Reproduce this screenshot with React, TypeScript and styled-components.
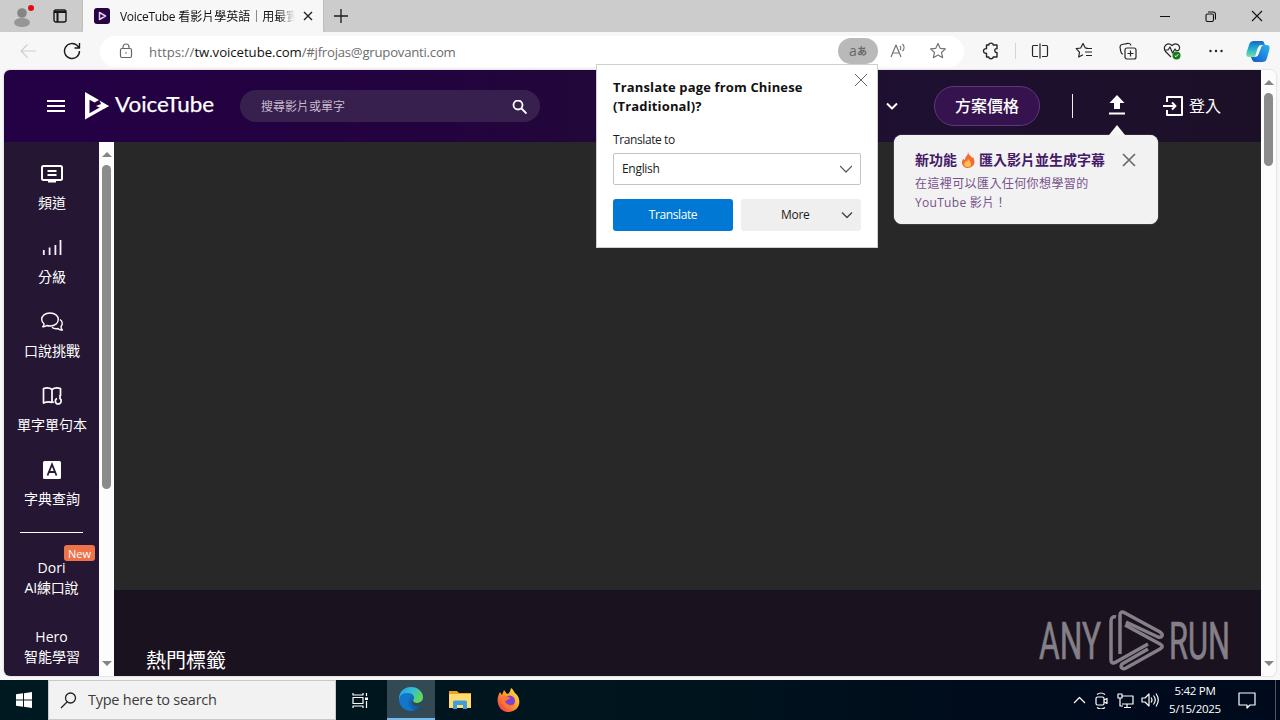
import styled, { createGlobalStyle } from "styled-components";

const GlobalStyle = createGlobalStyle`
  * {
    box-sizing: border-box;
  }
  body {
    margin: 0;
    overflow: hidden;
    font-family: "Open Sans", "Noto Sans", "Noto Sans CJK TC", sans-serif;
  }
  svg {
    display: block;
    flex: none;
  }
`;

const Screen = styled.div`
  position: relative;
  width: 1280px;
  height: 720px;
  display: flex;
  flex-direction: column;
  background: #f7f7f7;
  overflow: hidden;
`;

const Text = styled.span<{
  $size?: number;
  $color?: string;
  $weight?: number;
  $spacing?: number;
  $line?: number;
}>`
  font-size: ${({ $size = 12 }) => $size}px;
  color: ${({ $color = "#fff" }) => $color};
  font-weight: ${({ $weight = 400 }) => $weight};
  letter-spacing: ${({ $spacing = 0 }) => $spacing}px;
  line-height: ${({ $line = 20 }) => $line}px;
  white-space: nowrap;
`;

/* Browser chrome */

const TabStrip = styled.div`
  height: 32px;
  display: flex;
  background: #cccccc;
`;

const ProfileArea = styled.div`
  width: 83px;
  display: flex;
  align-items: center;
  padding-left: 11px;
  gap: 19px;
  border-right: 1px solid #bdbdbd;
  border-bottom-right-radius: 4px;
`;

const ActiveTab = styled.div`
  width: 240px;
  display: flex;
  align-items: center;
  padding-left: 11px;
  background: #f7f7f7;
`;

const TabTitle = styled.div`
  width: 178px;
  margin: 0 5px 0 10px;
  overflow: hidden;
  white-space: nowrap;
  line-height: 20px;
  mask-image: linear-gradient(to right, #000 158px, transparent 175px);
`;

const NewTab = styled.div`
  display: flex;
  align-items: center;
  padding-left: 10px;
  border-left: 1px solid #bdbdbd;
  border-bottom-left-radius: 4px;
`;

const WindowButtons = styled.div`
  display: flex;
  align-items: center;
  margin-left: auto;
  padding-right: 17px;
  gap: 35px;
`;

const Toolbar = styled.div`
  height: 38px;
  display: flex;
  align-items: center;
  padding: 0 10px 0 19px;
  background: #f7f7f7;
`;

const NavButtons = styled.div`
  width: 81px;
  display: flex;
  gap: 26px;
`;

const AddressBar = styled.div`
  width: 864px;
  height: 31px;
  display: flex;
  align-items: center;
  padding: 0 17px 0 18px;
  border-radius: 16px;
  background: #fff;
`;

const Url = styled.div`
  margin-left: 15px;
`;

const AddressActions = styled.div`
  display: flex;
  align-items: center;
  margin-left: auto;
  gap: 22px;
`;

const TranslateBadge = styled.div`
  width: 40px;
  height: 26px;
  margin-right: -11px;
  border-radius: 13px;
  display: flex;
  align-items: center;
  justify-content: center;
  background: #b9b9b9;
`;

const ToolbarIcons = styled.div`
  flex: 1;
  display: flex;
  align-items: center;
  gap: 26px;
  padding-left: 18px;
`;

const ToolbarDivider = styled.div`
  width: 1px;
  height: 16px;
  margin: 0 -11px;
  background: #d4d4d4;
`;

const CopilotSlot = styled.div`
  margin-left: -5px;
`;

/* Page */

const Viewport = styled.div`
  width: 1272px;
  height: 606px;
  margin-left: 4px;
  display: flex;
  border-radius: 6px;
  overflow: hidden;
  background: #fcfcfc;
  box-shadow: 0 0 2px rgba(0, 0, 0, 0.25);
`;

const Page = styled.div`
  width: 1257px;
  display: flex;
  flex-direction: column;
`;

const Header = styled.header`
  height: 72px;
  flex: none;
  display: flex;
  align-items: center;
  padding: 0 40px 0 42px;
  background: linear-gradient(90deg, #240045 0%, #23033e 35%, #1e1030 72%, #1c1028 100%);
`;

const LogoSlot = styled.div`
  margin-left: 19px;
`;

const SearchBox = styled.div`
  width: 300px;
  height: 32px;
  margin-left: 26px;
  padding: 2px 13px 0 21px;
  border-radius: 16px;
  display: flex;
  align-items: center;
  justify-content: space-between;
  background: #38204e;
`;

const HeaderActions = styled.div`
  margin-left: auto;
  display: flex;
  align-items: center;
`;

const PriceButton = styled.div`
  width: 106px;
  height: 40px;
  margin-left: 36px;
  border: 1px solid #60377e;
  border-radius: 20px;
  display: flex;
  align-items: center;
  justify-content: center;
  background: #36124f;
`;

const HeaderDivider = styled.div`
  width: 1px;
  height: 24px;
  margin: 0 36px 0 32px;
  background: #eee;
`;

const UploadSlot = styled.div`
  margin-top: -3px;
`;

const Login = styled.div`
  display: flex;
  align-items: center;
  gap: 6px;
  margin-left: 38px;
`;

const Body = styled.div`
  flex: 1;
  display: flex;
  min-height: 0;
`;

const Sidebar = styled.nav`
  width: 95px;
  overflow: hidden;
  background: #251733;
`;

const SideItem = styled.div`
  height: 74px;
  display: flex;
  flex-direction: column;
  align-items: center;
  padding-top: 20px;
  gap: 7px;
`;

const SideLabel = styled(Text)`
  padding-left: 1px;
`;

const SideDivider = styled.div`
  width: 63px;
  height: 1px;
  margin: 20px 0 25px 16px;
  background: #fff;
`;

const SideLink = styled.div`
  position: relative;
  height: 69px;
  display: flex;
  flex-direction: column;
  align-items: center;
`;

const NewBadge = styled.div`
  position: absolute;
  right: 4px;
  top: -13px;
  width: 31px;
  height: 16px;
  padding-top: 1px;
  border-radius: 3px;
  display: flex;
  align-items: center;
  justify-content: center;
  background: #ee734a;
`;

const Scrollbar = styled.div`
  width: 15px;
  height: 100%;
  flex: none;
  display: flex;
  flex-direction: column;
  align-items: center;
  padding: 10px 0;
  background: #fcfcfc;
`;

const Thumb = styled.div<{ $height: number }>`
  width: 9px;
  height: ${({ $height }) => $height}px;
  margin: 8px 0 auto;
  border-radius: 5px;
  background: #8b8b8b;
`;

const Arrow = styled.div<{ $down?: boolean }>`
  border: 5px solid transparent;
  border-top: ${({ $down }) => ($down ? "5px solid #858585" : "0")};
  border-bottom: ${({ $down }) => ($down ? "0" : "5px solid #858585")};
`;

const Content = styled.main`
  flex: 1;
  display: flex;
  flex-direction: column;
`;

const Hero = styled.div`
  flex: none;
  height: 448px;
  background: #282828;
`;

const Tags = styled.div`
  flex: none;
  height: 86px;
  display: flex;
  justify-content: space-between;
  padding: 20px 30px 0 32px;
  background: #1a131f;
`;

const TagsTitle = styled.div`
  margin-top: 35px;
`;

/* Overlays */

const Popup = styled.div`
  position: absolute;
  left: 596px;
  top: 64px;
  width: 282px;
  height: 184px;
  padding: 13px 16px 16px;
  border: 1px solid #cfcfd2;
  background: #fff;
`;

const PopupTop = styled.div`
  display: flex;
  align-items: flex-start;
  justify-content: space-between;
  height: 49px;
`;

const PopupClose = styled.div`
  margin-right: -7px;
  margin-top: -5px;
`;

const Select = styled.div`
  height: 32px;
  margin: 3px 0 14px;
  padding: 0 8px;
  border: 1px solid #c4c4c4;
  border-radius: 2px;
  display: flex;
  align-items: center;
  justify-content: space-between;
`;

const ButtonRow = styled.div`
  display: flex;
  gap: 8px;
`;

const Button = styled.div<{ $primary?: boolean }>`
  width: 120px;
  height: 32px;
  padding: ${({ $primary }) => ($primary ? "0" : "0 8px 0 40px")};
  border-radius: 3px;
  display: flex;
  align-items: center;
  justify-content: ${({ $primary }) => ($primary ? "center" : "space-between")};
  background: ${({ $primary }) => ($primary ? "#0078d4" : "#efefef")};
`;

const Tooltip = styled.div`
  position: absolute;
  left: 894px;
  top: 135px;
  width: 264px;
  height: 89px;
  padding: 15px 22px 0 21px;
  border-radius: 8px;
  background: #f2f2f2;
  box-shadow: 0 0 1px #fff;
  &::before {
    content: "";
    position: absolute;
    left: 215px;
    top: -10px;
    border: 8px solid transparent;
    border-top: 0;
    border-bottom: 10px solid #f6f6f6;
  }
`;

const TooltipTop = styled.div`
  display: flex;
  justify-content: space-between;
  align-items: center;
  height: 20px;
  margin-bottom: 4px;
`;

const TooltipTitle = styled.div`
  display: flex;
  align-items: center;
  gap: 4px;
`;

const TooltipLine = styled.div`
  height: 19px;
  display: flex;
  align-items: center;
`;

/* Taskbar */

const Taskbar = styled.div`
  height: 40px;
  margin-top: 4px;
  display: flex;
  background: linear-gradient(90deg, #001820 0%, #00141d 55%, #000b1c 78%, #000a1d 100%);
`;

const TaskCell = styled.div<{ $width?: number; $active?: boolean }>`
  width: ${({ $width = 49 }) => $width}px;
  display: flex;
  align-items: center;
  justify-content: center;
  background: ${({ $active }) => ($active ? "#334a54" : "transparent")};
  border-bottom: ${({ $active }) => ($active ? "2px solid #76b9ed" : "0")};
`;

const TaskSearch = styled.div`
  width: 288px;
  display: flex;
  align-items: center;
  padding-left: 11px;
  gap: 11px;
  border: 1px solid #c9c9c9;
  background: #f2f2f2;
`;

const Tray = styled.div`
  display: flex;
  align-items: center;
  margin-left: auto;
  padding-right: 4px;
  gap: 7px;
`;

const Clock = styled.div`
  width: 56px;
  margin: 0 8px 0 1px;
  display: flex;
  flex-direction: column;
  align-items: center;
`;

const TrayEnd = styled.div`
  width: 1px;
  height: 40px;
  margin-left: 12px;
  background: #4c5563;
`;

type IconProps = {
  w?: number;
  h?: number;
  color?: string;
  stroke?: number;
  box?: string;
  children: React.ReactNode;
};

const Icon = ({
  w = 18,
  h = w,
  color = "#262626",
  stroke = 1.2,
  box,
  children,
}: IconProps) => (
  <svg
    width={w}
    height={h}
    viewBox={box || `0 0 ${w} ${h}`}
    fill="none"
    stroke={color}
    strokeWidth={stroke}
    strokeLinejoin="round"
  >
    {children}
  </svg>
);

const starPath = "M9 1.5l2.2 4.8 5.2.6-3.9 3.6 1.1 5.2L9 13.1l-4.6 2.6 1.1-5.2-3.9-3.6 5.2-.6z";

const SIDE_ITEMS = [
  {
    label: "頻道",
    icon: (
      <Icon w={24} color="#fff" stroke={2}>
        <rect x="2" y="4" width="20" height="14" rx="1.5" />
        <path d="M8 19.5h8M7.5 9h9M7.5 13h9" />
      </Icon>
    ),
  },
  {
    label: "分級",
    icon: (
      <Icon w={24} color="#f7eeff" stroke={1.8}>
        <path d="M3.8 19v-5M9.6 19v-7.500M15.4 19V9M20.500 19V4" />
      </Icon>
    ),
  },
  {
    label: "口說挑戰",
    icon: (
      <Icon w={24} color="#fff" stroke={1.4}>
        <path d="M10 3c5 0 8.3 2.8 8.3 6.5S15 16 10 16c-1.2 0-2.3-.2-3.3-.5-1 .9-2.3 1.4-4 1.2 1-.8 1.4-1.8 1.3-3C2.500 12.500 1.700 11 1.700 9.500 1.700 5.800 5 3 10 3zM20 9.500c2.300 1.500 3.200 4.500 1 7 0 1.500.3 2.500 1.400 3.500-2 .3-3.500-.4-4.500-1.500-2.300.5-4.600-.1-6-1.300" />
      </Icon>
    ),
  },
  {
    label: "單字單句本",
    icon: (
      <Icon w={24} color="#fff" stroke={1.7}>
        <path d="M14 18.500q-1.500-1-2.500 0-3-1.500-8 .500V4.500c3-1 6-1 8.500 1 2.500-2 5.500-2 8.500-1V12M12 5.500V18M17 14.500c-2.500 1-2 5.500 1 5.500 3.500 0 4-4 2-5.500M20 11v4" />
      </Icon>
    ),
  },
  {
    label: "字典查詢",
    icon: (
      <Icon w={24} color="#2a1b35" stroke={1.8}>
        <rect x="3" y="3" width="18" height="18" rx="1.500" fill="#fff" stroke="none" />
        <path d="M7.500 17.500L12 6.500l4.500 11M9 14h6" strokeLinejoin="miter" />
      </Icon>
    ),
  },
];

const BrandLogo = () => (
  <Icon w={129} h={30} color="none">
    <path fill="#fff" d="M0 1l14 8-4.500 2.600-5-2.900v13.600L19 14l5 1-24 13.500z" />
    <path fill="#fff" d="M14.500 9.500L24 15l-6 3-7-3 5-2z" />
    <text
      x="30"
      y="21"
      fill="#fff"
      stroke="#fff"
      strokeWidth=".25"
      fontFamily="Lato, sans-serif"
      fontSize="21.500"
      textLength="99"
      lengthAdjust="spacingAndGlyphs"
    >
      VoiceTube
    </text>
  </Icon>
);

const Watermark = () => (
  <Icon w={192} h={62} color="#858087" stroke={3.500}>
    <g
      fill="#858087"
      strokeWidth=".7"
      fontFamily="Roboto, sans-serif"
      fontSize="52"
    >
      <text x="0" y="49" textLength="62" lengthAdjust="spacingAndGlyphs">
        ANY
      </text>
      <text x="130" y="49" textLength="61" lengthAdjust="spacingAndGlyphs">
        RUN
      </text>
    </g>
    <path d="M81 44V5c0-3 2-4 5-2l35 19c4 3 2 6-2 5L87 12M77 7c-3-1-5 1-5 4v39c0 3 2 4 5 2l32-18M86 15l35 19c3 2 3 3 0 5L87 58c-4 2-6-1-4-4l26-15" />
  </Icon>
);

const EdgeIcon = () => (
  <svg width="26" height="26" viewBox="0 0 26 26">
    <defs>
      <linearGradient id="edgeTop" x1="0" x2="1" y1="0" y2=".5">
        <stop stopColor="#249ae0" />
        <stop offset=".55" stopColor="#35bfd0" />
        <stop offset="1" stopColor="#62d957" />
      </linearGradient>
      <linearGradient id="edgeBody" x1="0" x2="1" y1="0" y2="1">
        <stop stopColor="#168cd8" />
        <stop offset="1" stopColor="#0b4fa1" />
      </linearGradient>
    </defs>
    <circle cx="13" cy="13" r="12" fill="url(#edgeBody)" />
    <path d="M1 13C1 5 7 1 13 1c7 0 12 5 12 10 0 4-3 6-7 6-2 0-4-1-3-2 3-5-1-8-5-8-5 0-8 3-9 6z" fill="url(#edgeTop)" />
    <path d="M15 15q1 2.500 5 2 3 0 5-3l1 5-3 .5c-5 2-9 0-10-4z" fill="#334a54" />
    <path d="M3 9c6-4 11 0 9 3-4 4-1 11 5 12C6 27-1 18 3 9z" fill="#1476ca" />
  </svg>
);

const FirefoxIcon = () => (
  <svg width="24" height="25" viewBox="0 0 24 25">
    <defs>
      <linearGradient id="fox" x1="1" x2="0" y1="0" y2="1">
        <stop stopColor="#fff24a" />
        <stop offset=".5" stopColor="#ff952a" />
        <stop offset="1" stopColor="#ef2360" />
      </linearGradient>
    </defs>
    <path d="M3 4l2 3 2-5 3 4c2 0 3-2 4-6 2 1 3 4 4 5 7 5 6 18-6 19C3 25-3 14 3 4z" fill="url(#fox)" />
    <circle cx="12.500" cy="13" r="5.500" fill="#7b42d9" />
    <path d="M4 9c4-2 7-1 10 2-3-1-3 2-6 2 1 4 6 5 9 3-3 7-14 4-13-7z" fill="#ff772f" />
  </svg>
);

const CopilotIcon = () => (
  <svg width="24" height="23" viewBox="0 0 24 23">
    <defs>
      <linearGradient id="copA" x1="0" x2="0" y1="0" y2="1">
        <stop stopColor="#1467c9" />
        <stop offset=".55" stopColor="#26b7cf" />
        <stop offset="1" stopColor="#7de0a0" />
      </linearGradient>
      <linearGradient id="copB" x1="1" x2="0" y1="0" y2="1">
        <stop stopColor="#29b6f2" />
        <stop offset="1" stopColor="#1556c8" />
      </linearGradient>
    </defs>
    <path d="M8 1h8c2 0 2 2 3 4h-4c-2 0-3 2-4 5l-1 4c-1 3-2 3-4 3H3c-3 0-3-3-2-6l2-6c1-3 2-4 5-4z" fill="url(#copA)" />
    <path d="M16 22H9c-2 0-3-2-4-5h3c3 0 4-1 5-4l2-5c1-3 2-3 4-3h2c3 0 3 3 2 6l-2 7c-1 3-2 4-5 4z" fill="url(#copB)" />
  </svg>
);

const BrowserChrome = () => (
  <>
    <TabStrip>
      <ProfileArea>
        <Icon w={23} h={24} color="none">
          <circle cx="11" cy="9" r="4.800" fill="#858585" />
          <ellipse cx="11" cy="18.500" rx="8" ry="4.500" fill="#969696" />
          <circle cx="20" cy="4" r="3" fill="#e30b13" />
        </Icon>
        <Icon w={14} color="#171717" stroke={1.400}>
          <rect x="1" y="1" width="12" height="12" rx="2" />
          <path d="M1 3h12M4.500 3v10" strokeWidth="2" />
        </Icon>
      </ProfileArea>
      <ActiveTab>
        <Icon w={16} color="none">
          <rect width="16" height="16" rx="3" fill="#260342" />
          <path d="M5.500 4.500l6 3.500-6 3.500z" stroke="#e4c9f4" strokeWidth="1.500" />
        </Icon>
        <TabTitle>
          <Text $color="#111" $spacing={-0.3}>VoiceTube</Text>
          <Text $color="#111"> 看影片學英語｜用最實用</Text>
        </TabTitle>
        <Icon w={10} color="#222" stroke={1.400}>
          <path d="M1 1l8 8M9 1L1 9" />
        </Icon>
      </ActiveTab>
      <NewTab>
        <Icon w={14} color="#1b1b1b" stroke={1.300}>
          <path d="M7 0v14M0 7h14" />
        </Icon>
      </NewTab>
      <WindowButtons>
        <Icon w={10} color="#111" stroke={1}>
          <path d="M0 5.500h10" />
        </Icon>
        <Icon w={11} color="#111" stroke={1.100}>
          <rect x="1" y="3" width="7.500" height="7.500" rx="1.500" />
          <path d="M3 1h5c1.500 0 2.500 1 2.500 2.500v5" />
        </Icon>
        <Icon w={12} color="#111" stroke={1.100}>
          <path d="M1 1l10 10M11 1L1 11" />
        </Icon>
      </WindowButtons>
    </TabStrip>
    <Toolbar>
      <NavButtons>
        <Icon w={18} color="#cfcfcf">
          <path d="M17 9H2M8.500 2.500L2 9l6.500 6.500" />
        </Icon>
        <Icon w={18} color="#1b1b1b" stroke={1.400}>
          <path d="M16.500 9a7.500 7.500 0 1 1-2.300-5.400L16.500 6M16.500 1v5h-5" />
        </Icon>
      </NavButtons>
      <AddressBar>
        <Icon w={16} color="#666">
          <rect x="2.500" y="5.500" width="11" height="9" rx="1.500" />
          <path d="M5 5.500V4a3 3 0 0 1 6 0v1.500" />
          <circle cx="8" cy="10" r=".8" fill="#666" stroke="none" />
        </Icon>
        <Url>
          <Text $size={13.2} $color="#6d6d6d" $spacing={0.05}>https://</Text>
          <Text $size={13.2} $color="#111" $spacing={-0.05}>tw.voicetube.com</Text>
          <Text $size={13.2} $color="#6d6d6d" $spacing={-0.25}>/#jfrojas@grupovanti.com</Text>
        </Url>
        <AddressActions>
          <TranslateBadge>
            <Text $size={14} $color="#686868">a</Text>
            <Text $size={10} $color="#686868" $weight={700}>あ</Text>
          </TranslateBadge>
          <Icon w={18} color="#737373">
            <path d="M2 15L7 3l5 12M3.700 11h6.600M11 4c1 1 1 3 0 4M13.500 2c2 2 2 5 0 7" />
          </Icon>
          <Icon w={18} color="#737373">
            <path d={starPath} />
          </Icon>
        </AddressActions>
      </AddressBar>
      <ToolbarIcons>
        <Icon w={18} stroke={1.400}>
          <path d="M4.500 3h2.300c0-2.500 4.400-2.500 4.400 0H15v3.700c-3-.8-3 4.500 0 3.800V15h-3.800c0 2.300-4.400 2.300-4.400 0H4.500v-3.700c-4 .6-4-5.200 0-4.600z" />
        </Icon>
        <ToolbarDivider />
        <Icon w={18}>
          <path d="M7 3.500H2.500Q1.500 3.500 1.500 5v8q0 1.500 1 1.500H7M11 3.500h4.500q1 0 1 1.500v8q0 1.500-1 1.500H11M9 1.500v15" />
        </Icon>
        <Icon w={18}>
          <path d="M12.500 6H10.300L8 1.500 5.700 6l-4.500.7 3.300 3.400-.8 5L8 12.700M11 6.500h6M10 10h7M11 13.500h6" />
        </Icon>
        <Icon w={18}>
          <rect x="6" y="6" width="11" height="11" rx="2" />
          <path d="M11.500 8.500v6M8.500 11.500h6M4 12C2 12 2 10 1.500 8L1 5q0-2 2-2.500L9 1.300Q11.500 1 12 3.500" />
        </Icon>
        <Icon w={18}>
          <path d="M8 15L2.500 9.500C-1 4 5-.5 9 3.500 13-.5 19 4 15.500 8.500M1 8h4l2-3 2.500 6L12 7l1 1.500h3" />
          <circle cx="13.500" cy="13.500" r="4" fill="#187b1b" stroke="none" />
          <path d="M11.800 13.700l1.200 1 2.300-2.500" stroke="#fff" strokeWidth="1" />
        </Icon>
        <Icon w={18} color="none">
          <g fill="#222">
            <circle cx="3.500" cy="9" r="1.200" />
            <circle cx="9" cy="9" r="1.200" />
            <circle cx="14.500" cy="9" r="1.200" />
          </g>
        </Icon>
        <CopilotSlot>
          <CopilotIcon />
        </CopilotSlot>
      </ToolbarIcons>
    </Toolbar>
  </>
);

const VerticalScroll = ({ thumb }: { thumb: number }) => (
  <Scrollbar>
    <Arrow />
    <Thumb $height={thumb} />
    <Arrow $down />
  </Scrollbar>
);

const PageHeader = () => (
  <Header>
    <Icon w={20} color="#fff" stroke={2}>
      <path d="M1 5h18M1 10h18M1 15h18" />
    </Icon>
    <LogoSlot>
      <BrandLogo />
    </LogoSlot>
    <SearchBox>
      <Text $color="#c9bdce">搜尋影片或單字</Text>
      <Icon w={15} color="#fff" stroke={1.800}>
        <circle cx="6" cy="5" r="4.500" />
        <path d="M9.500 8.500l5 5" />
      </Icon>
    </SearchBox>
    <HeaderActions>
      <Icon w={12} h={8} color="#fff" stroke={2}>
        <path d="M1 1.500l5 5 5-5" />
      </Icon>
      <PriceButton>
        <Text $size={16} $weight={500}>方案價格</Text>
      </PriceButton>
      <HeaderDivider />
      <UploadSlot>
        <Icon w={16} h={20} color="none">
          <path d="M8 0l7.500 8H11v6H5V8H.5zM0 17.500h16v2H0z" fill="#fff" />
        </Icon>
      </UploadSlot>
      <Login>
        <Icon w={20} color="#fff" stroke={2}>
          <path d="M4 6V1h15v18H4v-5M0 10h12M9 6.500l3.500 3.500L9 13.500" />
        </Icon>
        <Text $size={16} $line={22}>登入</Text>
      </Login>
    </HeaderActions>
  </Header>
);

const TranslatePopup = () => (
  <Popup>
    <PopupTop>
      <Text $size={13} $color="#111" $weight={700} $line={19} $spacing={0.15}>
        Translate page from Chinese
        <br />
        (Traditional)?
      </Text>
      <PopupClose>
        <Icon w={14} color="#666" stroke={1}>
          <path d="M1 1l12 12M13 1L1 13" />
        </Icon>
      </PopupClose>
    </PopupTop>
    <Text $color="#1b1b1b" $spacing={-0.4}>Translate to</Text>
    <Select>
      <Text $color="#1b1b1b" $spacing={-0.3}>English</Text>
      <Icon w={12} h={8} color="#555">
        <path d="M0 1l6 6 6-6" />
      </Icon>
    </Select>
    <ButtonRow>
      <Button $primary>
        <Text $spacing={-0.4}>Translate</Text>
      </Button>
      <Button>
        <Text $color="#1b1b1b" $spacing={-0.3}>More</Text>
        <Icon w={12} h={8} color="#444" stroke={1.400}>
          <path d="M1 1.500l5 5 5-5" />
        </Icon>
      </Button>
    </ButtonRow>
  </Popup>
);

const ImportTooltip = () => (
  <Tooltip>
    <TooltipTop>
      <TooltipTitle>
        <Text $size={14} $color="#451a68" $weight={700}>新功能</Text>
        <Icon w={14} color="none" box="0 0 14 16" h={16}>
          <path d="M7 0c1 4 3 3 4 6l1-1c4 7-1 11-5 11S-1 12 2 7l2 1C4 4 7 4 7 0z" fill="#f56b35" />
          <path d="M7 7c4 4 4 8 0 8s-5-3-2-6l1 1z" fill="#ffc05a" />
        </Icon>
        <Text $size={14} $color="#451a68" $weight={700}>匯入影片並生成字幕</Text>
      </TooltipTitle>
      <Icon w={14} color="#666" stroke={1.600}>
        <path d="M1 1l12 12M13 1L1 13" />
      </Icon>
    </TooltipTop>
    <TooltipLine>
      <Text $color="#76518c" $spacing={0.4}>在這裡可以匯入任何你想學習的</Text>
    </TooltipLine>
    <TooltipLine>
      <Text $color="#76518c" $spacing={0.3}>YouTube 影片！</Text>
    </TooltipLine>
  </Tooltip>
);

const WindowsTaskbar = () => (
  <Taskbar>
    <TaskCell $width={48}>
      <Icon w={16} color="none">
        <path fill="#fff" d="M0 2.300L7 1.300v6.200H0zM8 1.200L16 0v7.500H8zM0 8.500h7v6.200l-7-1zM8 8.500h8V16l-8-1.200z" />
      </Icon>
    </TaskCell>
    <TaskSearch>
      <Icon w={17} color="#222" stroke={1.300}>
        <circle cx="10.500" cy="6" r="5" />
        <path d="M7 10l-6 6" />
      </Icon>
      <Text $size={14.5} $color="#3c3c3c" $spacing={-0.25}>Type here to search</Text>
    </TaskSearch>
    <TaskCell $width={49}>
      <Icon w={17} color="#fff" stroke={1.200}>
        <path d="M1 1v2h10V1M1 16v-2h10v2M1 5.500h10v6H1zM14.500 1v3M14.500 9v7" />
        <path d="M13 5.500h3v2.500h-3z" fill="#fff" stroke="none" />
      </Icon>
    </TaskCell>
    <TaskCell $width={2} />
    <TaskCell $width={48} $active>
      <EdgeIcon />
    </TaskCell>
    <TaskCell>
      <Icon w={22} h={20} color="none">
        <path d="M0 1h8l2 2h12v15H0z" fill="#e9a522" />
        <path d="M0 4h22v14H0z" fill="#ffdb72" />
        <path d="M4 19v-7q0-1.500 2-1.500h10q2 0 2 1.500v7h-4v-4H8v4z" fill="#3f9dde" />
      </Icon>
    </TaskCell>
    <TaskCell>
      <FirefoxIcon />
    </TaskCell>
    <Tray>
      <Icon w={13} h={8} color="#fff" stroke={1.200}>
        <path d="M1 7l5.500-5.500L12 7" />
      </Icon>
      <Icon w={17} color="#fff" stroke={1.200}>
        <rect x="3" y="5" width="8" height="8" rx="1.500" />
        <path d="M11 8l3-1.500v5L11 10M4 2.500q4-3 8 0M4 15.500q4 3 8 0" />
      </Icon>
      <Icon w={17} color="#fff" stroke={1.200}>
        <path d="M5 4h11v8H5M1 2h4v4H1zM3 6v8h3M10 12v3M7 15.500h7" />
      </Icon>
      <Icon w={18} color="#fff" stroke={1.200}>
        <path d="M1 7h3l4-4v12l-4-4H1zM10 6.500q2 2.500 0 5M12.500 4.500q3.500 4.500 0 9M15 2.500q4.500 6.500 0 13" />
      </Icon>
      <Clock>
        <Text $size={11.5} $line={18} $spacing={-0.3}>5:42 PM</Text>
        <Text $size={11.5} $line={18} $spacing={-0.3}>5/15/2025</Text>
      </Clock>
      <Icon w={18} color="#fff" stroke={1.200}>
        <path d="M1 2h16v12h-5l-3 3v-3H1z" />
      </Icon>
      <TrayEnd />
    </Tray>
  </Taskbar>
);

const App = () => (
  <>
    <GlobalStyle />
    <Screen>
      <BrowserChrome />
      <Viewport>
        <Page>
          <PageHeader />
          <Body>
            <Sidebar>
              {SIDE_ITEMS.map(({ label, icon }) => (
                <SideItem key={label}>
                  {icon}
                  <SideLabel $size={14}>{label}</SideLabel>
                </SideItem>
              ))}
              <SideDivider />
              <SideLink>
                <Text $size={14}>Dori</Text>
                <Text $size={14} $spacing={-0.2}>AI練口說</Text>
                <NewBadge>
                  <Text $size={11}>New</Text>
                </NewBadge>
              </SideLink>
              <SideLink>
                <Text $size={14}>Hero</Text>
                <SideLabel $size={14}>智能學習</SideLabel>
              </SideLink>
            </Sidebar>
            <VerticalScroll thumb={324} />
            <Content>
              <Hero />
              <Tags>
                <TagsTitle>
                  <Text $size={20} $line={32}>熱門標籤</Text>
                </TagsTitle>
                <Watermark />
              </Tags>
            </Content>
          </Body>
        </Page>
        <VerticalScroll thumb={73} />
      </Viewport>
      <WindowsTaskbar />
      <TranslatePopup />
      <ImportTooltip />
    </Screen>
  </>
);

export default App;
